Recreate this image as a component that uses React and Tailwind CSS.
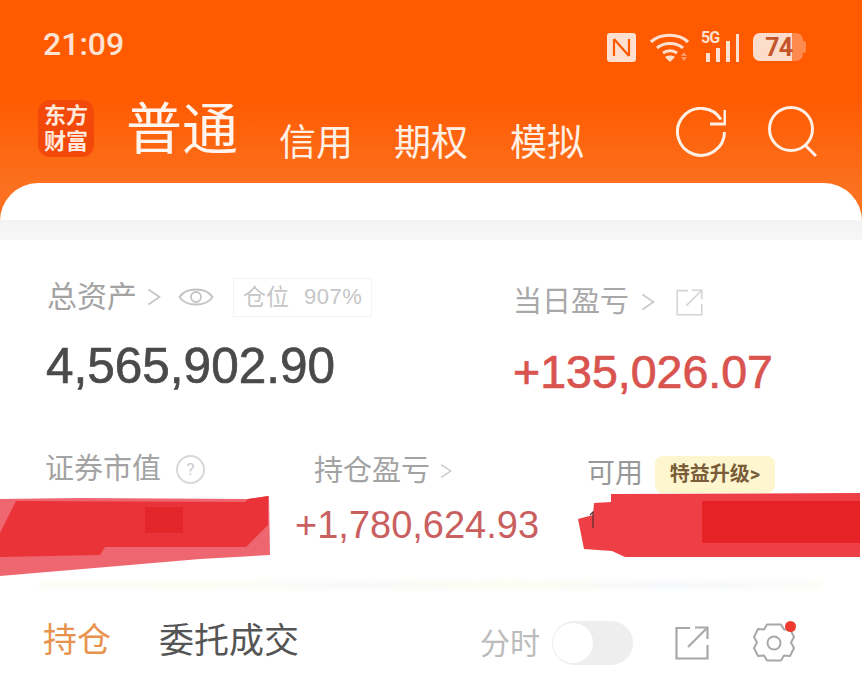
import React from 'react';

const Chevron = ({ className }) => (
    <svg viewBox="0 0 14 20" fill="none" stroke="currentColor" strokeWidth="1.6" className={className}>
        <path d="M1.5 2.5 12.5 10 1.5 17.5" />
    </svg>
);

const ShareIcon = ({ className, strokeWidth = 2 }) => (
    <svg viewBox="0 0 34 34" fill="none" stroke="currentColor" strokeWidth={strokeWidth} className={className}>
        <path d="M15 2H1.5v30.5h31V19" />
        <path d="M13 21 32.5 1.5" />
        <path d="M20 1.5h12.5V13" />
    </svg>
);

const StatusIcons = () => (
    <div className="flex items-center">
        <svg viewBox="0 0 29 29" className="w-[29px] h-[29px]">
            <rect width="29" height="29" rx="3" fill="#fde0d0" />
            <path d="M7 6v17M7 6l15 17M22 6v17" fill="none" stroke="#ff5a00" strokeWidth="2.2" />
        </svg>
        <svg viewBox="0 0 42 30" fill="none" stroke="#fde0d0" strokeWidth="3.2" className="w-[42px] h-[30px] ml-[13px]">
            <path d="M2 10C11 1 30 1 39 10" />
            <path d="M8 16c7-6 19-6 26 0" />
            <path d="M14 21c4-3 10-3 14 0" />
            <path d="M21 30l-5-5c3-2 7-2 10 0z" fill="#fde0d0" stroke="none" />
            <path d="M35 20l3 4h-6zM32 25h6l-3 4z" fill="#ff9a66" stroke="none" />
        </svg>
        <div className="relative w-[38px] h-[30px] ml-[10px]">
            <span className="absolute left-0 top-[-2px] text-[16px] leading-[16px] font-bold tracking-[-1px] text-[#fde0d0]">5G</span>
            <div className="absolute right-0 bottom-0 flex items-end gap-[6px]">
                <div className="w-[4px] h-[9px] bg-[#fde0d0]" />
                <div className="w-[4px] h-[14px] bg-[#fde0d0]" />
                <div className="w-[4px] h-[21px] bg-[#fde0d0]" />
                <div className="w-[3px] h-[28px] bg-[#fde0d0]" />
            </div>
        </div>
        <div className="flex items-center ml-[14px]">
            <div className="w-[50px] h-[28px] rounded-[7px] bg-[#ff8a4d] overflow-hidden flex">
                <div className="w-[39px] h-full bg-[#fcdccb] flex items-center justify-end">
                    <span className="text-[25px] leading-none font-bold tracking-[-1px] text-[#c4552a]">74</span>
                </div>
            </div>
            <div className="w-[3px] h-[12px] rounded-r-[2px] bg-[#ff8a4d]" />
        </div>
    </div>
);

const Redaction = ({ side }) =>
    side === 'left' ? (
        <svg viewBox="0 0 270 82" className="w-[270px] h-[82px] shrink-0 blur-[0.6px]">
            <path d="M0 4 80 3 248 4 269 1 270 60 200 64 130 70 0 81z" fill="#ee6670" />
            <path d="M0 38 16 6 245 7 248 4 268 1 268 30 246 52 105 52 100 60 0 62z" fill="#ea3338" />
            <path d="M145 12h38v26h-38z" fill="#e3262a" />
        </svg>
    ) : (
        <svg viewBox="0 0 285 64" className="w-[285px] h-[64px] shrink-0 blur-[0.6px]">
            <path d="M34 1 283 0V64H48L35 58 7 56 1 26 16 22 17 10 34 9z" fill="#ee3f46" />
            <path d="M125 8H283V50H125z" fill="#e62226" />
            <path d="M13 22l3-3v16" fill="none" stroke="#5a3030" strokeWidth="1.2" />
        </svg>
    );

const App = () => {
    return (
        <div className="w-[862px] h-[683px] overflow-hidden flex flex-col font-[Roboto,'Noto_Sans_CJK_SC',sans-serif] bg-[linear-gradient(to_bottom,#ff5a00_0,#ff5a00_95px,#fb7120_190px)]">
            {/* status bar */}
            <div className="h-[88px] pl-[43px] pr-[56px] pt-[24px] flex items-start justify-between">
                <span className="text-[32px] leading-[40px] font-medium text-[#fde3d3]">21:09</span>
                <div className="pt-[8px]">
                    <StatusIcons />
                </div>
            </div>

            {/* account tabs */}
            <div className="h-[95px] pl-[38px] flex items-start">
                <div className="mt-[12px] w-[56px] h-[57px] rounded-[12px] bg-[#f2480a] text-[#ffe9dc] text-[22px] leading-[26px] font-bold flex flex-col items-center justify-center">
                    <span>东方</span>
                    <span>财富</span>
                </div>
                <span className="ml-[32px] mt-[2px] text-[56px] leading-[80px] text-[#fff5ee]">普通</span>
                <span className="ml-[41px] mt-[28px] text-[37px] leading-[56px] text-[#fff0e6]">信用</span>
                <span className="ml-[41px] mt-[28px] text-[37px] leading-[56px] text-[#fff0e6]">期权</span>
                <span className="ml-[42px] mt-[28px] text-[37px] leading-[56px] text-[#fff0e6]">模拟</span>
                <svg viewBox="0 0 50 50" fill="none" stroke="#fff0e6" strokeWidth="3" className="w-[50px] h-[50px] ml-[92px] mt-[19px]">
                    <path d="M48.500 25A23.500 23.500 0 1 1 45 12.500" />
                    <path d="M49 3v14H34" />
                </svg>
                <svg viewBox="0 0 50 52" fill="none" stroke="#fff0e6" strokeWidth="3" className="w-[50px] h-[52px] ml-[42px] mt-[18px]">
                    <circle cx="23" cy="23" r="21.500" />
                    <path d="M37 39l11 11" />
                </svg>
            </div>

            <div className="flex-1 bg-white rounded-t-[38px] overflow-hidden flex flex-col">
                <div className="mt-[37px] h-[20px] shrink-0 bg-[linear-gradient(to_bottom,#f3f3f3,#f7f7f7)]" />

                {/* total assets / day profit */}
                <div className="flex mt-[39px] h-[40px] items-center">
                    <div className="w-[513px] pl-[47px] flex items-center mt-[-4px]">
                        <span className="text-[30px] leading-[40px] text-[#a3a3a3]">总资产</span>
                        <Chevron className="w-[14px] h-[20px] ml-[10px] text-[#c4c4c4]" />
                        <svg viewBox="0 0 36 24" fill="none" stroke="#c4c4c4" strokeWidth="1.8" className="w-[36px] h-[24px] ml-[17px]">
                            <path d="M1.500 12C8 2 28 2 34.500 12 28 22 8 22 1.500 12z" />
                            <circle cx="18" cy="12" r="5" />
                        </svg>
                        <div className="ml-[19px] w-[139px] h-[39px] border border-[#f3f3f3] flex items-center pl-[9px] gap-[15px] text-[#c6c6c6]">
                            <span className="text-[23px] leading-none">仓位</span>
                            <span className="text-[22px] leading-none font-medium font-['Liberation_Sans'] tracking-[0.5px]">907%</span>
                        </div>
                    </div>
                    <div className="flex items-center mt-[6px]">
                        <span className="text-[29px] leading-[40px] text-[#a8a8a8]">当日盈亏</span>
                        <Chevron className="w-[14px] h-[20px] ml-[12px] text-[#c8c8c8]" />
                        <ShareIcon className="w-[27px] h-[27px] ml-[21px] text-[#d4d4d4]" />
                    </div>
                </div>

                <div className="flex mt-[29px] h-[48px] items-center font-['Liberation_Sans']">
                    <div className="w-[513px] pl-[46px] mt-[-12px]">
                        <span className="text-[49.5px] leading-[48px] text-[#4a4a4a] [-webkit-text-stroke:0.7px_#4a4a4a]">4,565,902.90</span>
                    </div>
                    <span className="text-[46.5px] leading-[48px] text-[#d9534f] [-webkit-text-stroke:0.7px_#d9534f]">+135,026.07</span>
                </div>

                {/* holdings labels */}
                <div className="flex mt-[55px] h-[40px] items-start">
                    <div className="w-[314px] pl-[45px] flex items-center h-[36px]">
                        <span className="text-[29px] leading-[36px] text-[#a3a3a3]">证券市值</span>
                        <span className="ml-[15px] w-[29px] h-[29px] rounded-full border-2 border-[#d8d8d8] flex items-center justify-center text-[17px] leading-none text-[#cccccc]">?</span>
                    </div>
                    <div className="w-[273px] flex items-center h-[40px]">
                        <span className="text-[29px] leading-[40px] text-[#a3a3a3]">持仓盈亏</span>
                        <Chevron className="w-[12px] h-[18px] ml-[10px] text-[#c8c8c8]" />
                    </div>
                    <div className="flex items-center h-[46px]">
                        <span className="text-[28px] leading-[40px] text-[#999999]">可用</span>
                        <span className="ml-[12px] w-[120px] h-[37px] rounded-[8px] bg-[#fdf6cf] flex items-center justify-center text-[20px] leading-none font-bold text-[#7a5c38]">
                            特益升级&gt;
                        </span>
                    </div>
                </div>

                <div className="flex items-center mt-[-2px] h-[84px]">
                    <div className="mt-[10px]">
                        <Redaction side="left" />
                    </div>
                    <span className="ml-[25px] w-[244px] shrink-0 whitespace-nowrap font-['Liberation_Sans'] text-[38px] leading-[44px] text-[#c9605f] mt-[-12px]">+1,780,624.93</span>
                    <div className="ml-[38px] mt-[-12px]">
                        <Redaction side="right" />
                    </div>
                </div>

                <div className="h-[8px] mt-[8px] mx-[40px] shrink-0 bg-[linear-gradient(to_right,#fbfdf6,#fdfdf4,#f7faf9,#fdfcf0,#f6f8fc,#fafdf6)] blur-[2px]" />

                {/* positions tabs */}
                <div className="flex items-center mt-[27px] h-[48px] shrink-0 pl-[43px]">
                    <span className="text-[34px] leading-[48px] text-[#e8934d]">持仓</span>
                    <span className="ml-[48px] text-[35px] leading-[48px] mt-[4px] text-[#555555]">委托成交</span>
                    <span className="ml-[181px] text-[30px] leading-[48px] mt-[8px] text-[#bcbcbc]">分时</span>
                    <div className="ml-[12px] mt-[6px] w-[81px] h-[44px] rounded-full bg-[#eeeeee] flex items-center">
                        <div className="w-[40px] h-[40px] ml-[1px] rounded-full bg-white" />
                    </div>
                    <ShareIcon className="w-[34px] h-[34px] ml-[42px] mt-[6px] text-[#a8a8a8]" strokeWidth="2.200" />
                    <div className="relative ml-[44px] mt-[6px] w-[42px] h-[42px]">
                        <svg viewBox="0 0 42 42" fill="none" stroke="#a8a8a8" strokeWidth="2" className="w-[42px] h-[42px]">
                            <path d="M14 2.500h14l3 5 6-.5 4 8-3 5.500 3 5.500-4 8-6-.5-3 5H14l-3-5-6 .5-4-8 3-5.500L1 15l4-8 6 .5z" strokeLinejoin="round" />
                            <circle cx="21" cy="21" r="6.500" />
                        </svg>
                        <div className="absolute right-[-1px] top-[-1px] w-[11px] h-[11px] rounded-full bg-[#ee3b30]" />
                    </div>
                </div>
            </div>
        </div>
    );
};

export default App;
